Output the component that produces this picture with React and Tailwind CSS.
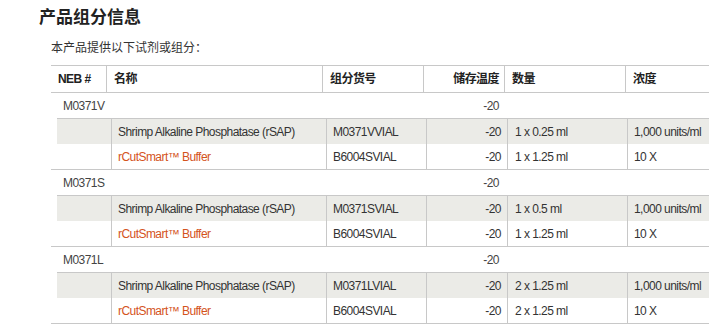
import React from "react";

const font = { fontFamily: '"Liberation Sans", Arial, "Noto Sans CJK SC", sans-serif' };

const groups = [
  {
    id: "M0371V",
    rows: [
      ["Shrimp Alkaline Phosphatase (rSAP)", "M0371VVIAL", "-20", "1 x 0.25 ml", "1,000 units/ml"],
      ["rCutSmart™ Buffer", "B6004SVIAL", "-20", "1 x 1.25 ml", "10 X"],
    ],
  },
  {
    id: "M0371S",
    rows: [
      ["Shrimp Alkaline Phosphatase (rSAP)", "M0371SVIAL", "-20", "1 x 0.5 ml", "1,000 units/ml"],
      ["rCutSmart™ Buffer", "B6004SVIAL", "-20", "1 x 1.25 ml", "10 X"],
    ],
  },
  {
    id: "M0371L",
    rows: [
      ["Shrimp Alkaline Phosphatase (rSAP)", "M0371LVIAL", "-20", "2 x 1.25 ml", "1,000 units/ml"],
      ["rCutSmart™ Buffer", "B6004SVIAL", "-20", "2 x 1.25 ml", "10 X"],
    ],
  },
];

function SubRow({ r, shaded }) {
  return (
    <div className={`flex h-[25px] items-center text-[12px] tracking-[-0.55px] text-[#333] whitespace-nowrap ${shaded ? "bg-[#ebebe7]" : "bg-white"}`}>
      <div className="w-[54px] h-full"></div>
      <div className={`w-[215px] h-full border-l border-[#c8c8c8] pl-[6px] flex items-center ${shaded ? "" : "text-[#d4531c]"}`}>{r[0]}</div>
      <div className="w-[100px] h-full border-l border-[#c8c8c8] pl-[6px] flex items-center">{r[1]}</div>
      <div className="w-[81px] h-full border-l border-[#c8c8c8] pr-[6px] flex items-center justify-end">{r[2]}</div>
      <div className="w-[120px] h-full border-l border-[#c8c8c8] pl-[7px] flex items-center">{r[3]}</div>
      <div className="w-[82px] h-full border-l border-[#c8c8c8] pl-[6px] flex items-center">{r[4]}</div>
    </div>
  );
}

export default function App() {
  return (
    <div className="w-[720px] h-[332px] bg-white overflow-hidden" style={font}>
      <div className="pl-[39px] pt-[8px]">
        <h2 className="text-[17px] leading-[20px] font-bold text-[#222]">产品组分信息</h2>
      </div>
      <div className="pl-[51px] mt-[12px] text-[12px] leading-[16px] text-[#333]">本产品提供以下试剂或组分：</div>
      <div className="ml-[51px] mt-[9px] w-[658px]">
        <div className="flex h-[28px] border-t border-b border-[#c8c8c8] text-[12px] tracking-[-0.55px] font-bold text-[#222] items-center whitespace-nowrap">
          <div className="w-[55px] h-full pl-[7px] flex items-center">NEB #</div>
          <div className="w-[216px] h-full border-l border-[#c8c8c8] pl-[7px] flex items-center">名称</div>
          <div className="w-[101px] h-full border-l border-[#c8c8c8] pl-[7px] flex items-center">组分货号</div>
          <div className="w-[81px] h-full border-l border-[#c8c8c8] pr-[5px] flex items-center justify-end">储存温度</div>
          <div className="w-[121px] h-full border-l border-[#c8c8c8] pl-[7px] flex items-center">数量</div>
          <div className="w-[84px] h-full border-l border-[#c8c8c8] pl-[7px] flex items-center">浓度</div>
        </div>
        {groups.map((g) => (
          <div key={g.id} className="border-b border-[#c8c8c8]">
            <div className="flex h-[25px] items-center text-[12px] tracking-[-0.55px] text-[#444] whitespace-nowrap">
              <div className="w-[372px] pl-[12px]">{g.id}</div>
              <div className="w-[81px] pr-[5px] text-right">-20</div>
            </div>
            <div className="pl-[6px]">
              <div className="border-t border-[#c8c8c8]">
                {g.rows.map((r, i) => (
                  <SubRow key={i} r={r} shaded={i === 0} />
                ))}
              </div>
            </div>
          </div>
        ))}
      </div>
    </div>
  );
}
